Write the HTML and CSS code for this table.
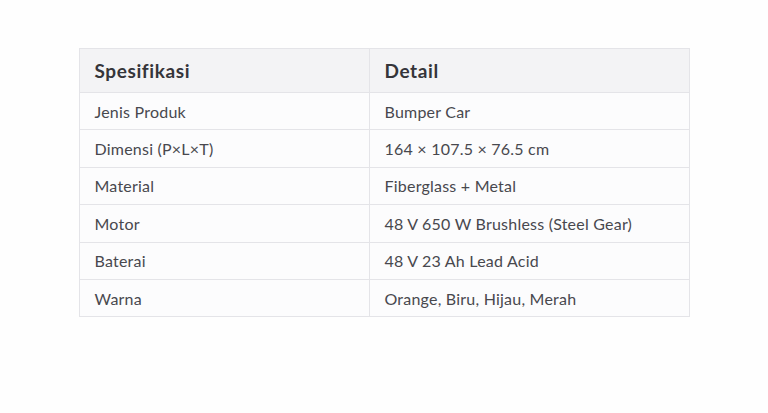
FILE: index.html
```html
<!DOCTYPE html>
<html lang="id">
<head>
<meta charset="utf-8">
<title>Spesifikasi</title>
<link rel="stylesheet" href="styles.css">
</head>
<body>
<main class="page">
  <table class="spec">
    <thead>
      <tr><th class="col-a">Spesifikasi</th><th>Detail</th></tr>
    </thead>
    <tbody>
      <tr><td>Jenis Produk</td><td>Bumper Car</td></tr>
      <tr><td>Dimensi (P×L×T)</td><td>164 × 107.5 × 76.5 cm</td></tr>
      <tr><td>Material</td><td>Fiberglass + Metal</td></tr>
      <tr><td>Motor</td><td>48 V 650 W Brushless (Steel Gear)</td></tr>
      <tr><td>Baterai</td><td>48 V 23 Ah Lead Acid</td></tr>
      <tr><td>Warna</td><td>Orange, Biru, Hijau, Merah</td></tr>
    </tbody>
  </table>
</main>
</body>
</html>
```
FILE: styles.css
```css
html, body {
  margin: 0;
  padding: 0;
  background: #fefefe;
}
.page {
  display: flex;
  justify-content: center;
  padding-top: 48px;
  font-family: Lato, "Open Sans", sans-serif;
  font-variant-ligatures: none;
}
.spec {
  width: 611px;
  border-collapse: collapse;
  background: #fcfcfd;
}
.spec th, .spec td {
  border: 1px solid #e4e4e8;
  text-align: left;
  padding: 0 15px;
}
.spec th {
  height: 43px;
  background: #f3f3f5;
  font-size: 19px;
  font-weight: 700;
  letter-spacing: 0.6px;
  color: #35353a;
}
.spec td {
  height: 36.4px;
  font-size: 16px;
  letter-spacing: 0.22px;
  color: #48484e;
}
.col-a {
  width: 259px;
}
```
